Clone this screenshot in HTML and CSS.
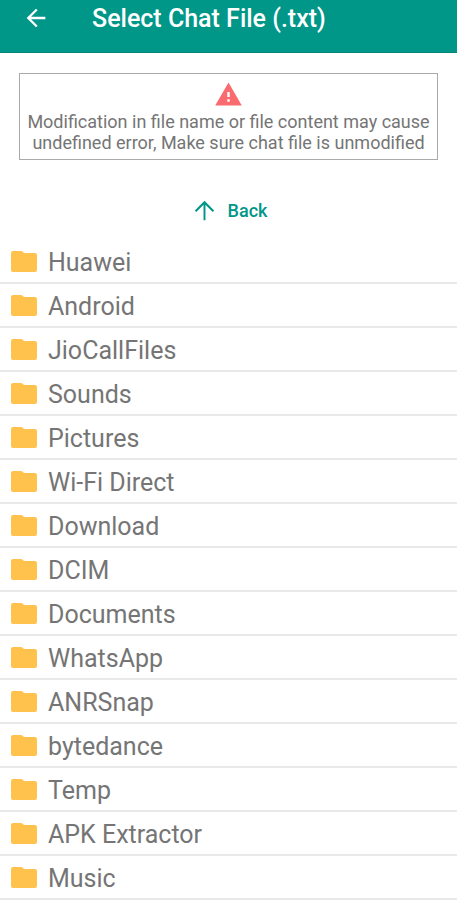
FILE: index.html
```html
<!DOCTYPE html>
<html lang="en">
<head>
<meta charset="utf-8">
<meta name="viewport" content="width=device-width, initial-scale=1">
<title>Select Chat File (.txt)</title>
<link rel="stylesheet" href="styles.css">
</head>
<body>
<header class="app-bar">
  <button class="nav-button" type="button" aria-label="Navigate up">
    <svg class="nav-icon" viewBox="0 0 24 24" aria-hidden="true"><path d="M20 11H7.83l5.59-5.59L12 4l-8 8 8 8 1.41-1.41L7.83 13H20z"/></svg>
  </button>
  <h1 class="title">Select Chat File (.txt)</h1>
</header>
<main>
  <section class="notice">
    <svg class="warning-icon" viewBox="0 0 24 24" aria-hidden="true"><path d="M1 21h22L12 2zm12-3h-2v-2h2zm0-4h-2v-4h2z"/></svg>
    <p class="notice-text">Modification in file name or file content may cause undefined error, Make sure chat file is unmodified</p>
  </section>
  <button class="back" type="button">
    <svg class="back-icon" viewBox="0 0 24 24" aria-hidden="true"><path d="M4 12l1.2 1.2L11.2 7.2V20h1.6V7.2l6 6L20 12l-8-8z"/></svg>
    <span>Back</span>
  </button>
  <svg class="symbols" aria-hidden="true"><symbol id="folder" viewBox="0 0 26 21"><path d="M2 0h8q1 0 2 1l1 1h11q2 0 2 2v15q0 2-2 2H2q-2 0-2-2V2q0-2 2-2z"/></symbol></svg>
  <ul class="files">
    <li><button class="file" type="button"><svg class="folder"><use href="#folder"/></svg>Huawei</button></li>
    <li><button class="file" type="button"><svg class="folder"><use href="#folder"/></svg>Android</button></li>
    <li><button class="file" type="button"><svg class="folder"><use href="#folder"/></svg>JioCallFiles</button></li>
    <li><button class="file" type="button"><svg class="folder"><use href="#folder"/></svg>Sounds</button></li>
    <li><button class="file" type="button"><svg class="folder"><use href="#folder"/></svg>Pictures</button></li>
    <li><button class="file" type="button"><svg class="folder"><use href="#folder"/></svg>Wi-Fi Direct</button></li>
    <li><button class="file" type="button"><svg class="folder"><use href="#folder"/></svg>Download</button></li>
    <li><button class="file" type="button"><svg class="folder"><use href="#folder"/></svg>DCIM</button></li>
    <li><button class="file" type="button"><svg class="folder"><use href="#folder"/></svg>Documents</button></li>
    <li><button class="file" type="button"><svg class="folder"><use href="#folder"/></svg>WhatsApp</button></li>
    <li><button class="file" type="button"><svg class="folder"><use href="#folder"/></svg>ANRSnap</button></li>
    <li><button class="file" type="button"><svg class="folder"><use href="#folder"/></svg>bytedance</button></li>
    <li><button class="file" type="button"><svg class="folder"><use href="#folder"/></svg>Temp</button></li>
    <li><button class="file" type="button"><svg class="folder"><use href="#folder"/></svg>APK Extractor</button></li>
    <li><button class="file" type="button"><svg class="folder"><use href="#folder"/></svg>Music</button></li>
  </ul>
</main>
</body>
</html>
```
FILE: styles.css
```css
* { box-sizing: border-box; }
body { margin: 0; background: #fff; color: #757575; font-family: Roboto, sans-serif; }
button { border: 0; padding: 0; background: none; font: inherit; color: inherit; cursor: pointer; }
svg { display: block; fill: currentColor; }
.symbols { display: none; }
.app-bar { display: flex; align-items: flex-start; gap: 42px; padding: 4px 22px 18px; border-bottom: 1px solid #00897b; background: #009688; color: #fff; }
.nav-icon { width: 28px; height: 28px; }
.title { margin: 0; font-size: 25px; line-height: 30px; font-weight: 500; }
.notice { margin: 20px 19px 0; padding: 4px 4px 6px; border: 1px solid #aaa; text-align: center; }
.warning-icon { width: 29px; height: 33px; margin: 0 auto; color: #fa6b70; }
.notice-text { margin: 0; font-size: 18px; line-height: 21px; }
.back { display: flex; align-items: center; gap: 9px; margin: 36px auto 0; color: #009688; font-size: 18px; line-height: 28px; font-weight: 500; }
.back-icon { width: 29px; height: 29px; }
.files { margin: 15px 0 0; padding: 0; list-style: none; }
.file { display: flex; align-items: center; gap: 11px; width: 100%; height: 44px; padding: 4px 11px 0; border-bottom: 2px solid #e9e9e9; font-size: 25px; line-height: 30px; text-align: left; }
.folder { width: 26px; height: 21px; margin-bottom: 4px; color: #ffc34d; }
```
